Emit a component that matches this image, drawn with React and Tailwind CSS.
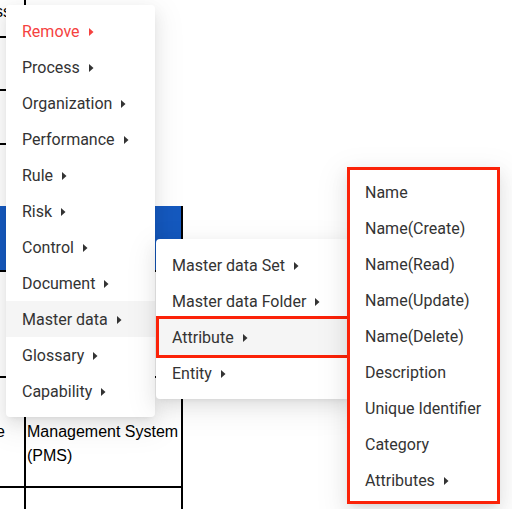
import React from 'react';

const mainItems = [
  { label: 'Remove', danger: true },
  { label: 'Process' },
  { label: 'Organization' },
  { label: 'Performance' },
  { label: 'Rule' },
  { label: 'Risk' },
  { label: 'Control' },
  { label: 'Document' },
  { label: 'Master data', active: true },
  { label: 'Glossary' },
  { label: 'Capability' },
];

const masterDataItems = [
  { label: 'Master data Set' },
  { label: 'Master data Folder' },
  { label: 'Attribute', active: true, marked: true },
  { label: 'Entity' },
];

const attributeItems = [
  { label: 'Name' },
  { label: 'Name(Create)' },
  { label: 'Name(Read)' },
  { label: 'Name(Update)' },
  { label: 'Name(Delete)' },
  { label: 'Description' },
  { label: 'Unique Identifier' },
  { label: 'Category' },
  { label: 'Attributes', sub: true },
];

const Caret = () => (
  <svg width="5" height="8" viewBox="0 0 5 8" className="ml-[9px] shrink-0">
    <path d="M0 0L4.5 4L0 8Z" fill="currentColor" />
  </svg>
);

const menuShadow =
  'shadow-[0_6px_16px_0_rgba(0,0,0,0.08),0_3px_6px_-4px_rgba(0,0,0,0.12),0_9px_28px_8px_rgba(0,0,0,0.05)]';

const MenuItem = ({ item, sub = true }) => (
  <div
    className={`relative flex h-9 items-center px-4 pt-px text-[16px] leading-none ${
      item.danger ? 'text-[#f5423f]' : 'text-[#333333]'
    } ${item.active ? 'bg-[#f5f5f5]' : ''}`}
  >
    <span>{item.label}</span>
    {sub && <Caret />}
    {item.marked && (
      <span className="pointer-events-none absolute -bottom-[3px] -right-[2px] -top-[3px] left-0 border-[3px] border-[#fb2208]" />
    )}
  </div>
);

const App = () => {
  return (
    <div className="relative h-[509px] w-[512px] overflow-hidden bg-white font-['Liberation_Sans',Arial,sans-serif] text-[16px] text-black">
      {/* Background table, mostly hidden by the menus */}
      <div className="w-[152px]">
        <div className="flex h-[38px] border-b-2 border-black">
          <div className="flex w-[26px] shrink-0 justify-end overflow-hidden border-r-2 border-black pr-[13px] pt-[3px] leading-[18px]">
            <span className="whitespace-nowrap">Process</span>
          </div>
          <div className="flex-1" />
        </div>
        <div className="flex h-[53px] border-b-2 border-black">
          <div className="w-[26px] shrink-0 border-r-2 border-black" />
        </div>
        <div className="flex h-[54px] border-b-2 border-black">
          <div className="w-[26px] shrink-0 border-r-2 border-black" />
        </div>
        <div className="flex h-[61px]">
          <div className="w-[26px] shrink-0 border-r-2 border-black" />
        </div>
      </div>
      <div className="w-[183px] border-r-2 border-black">
        <div className="h-[66px] border-b-2 border-black bg-[#1559bf]" />
        <div className="flex h-[106px] border-b-2 border-black">
          <div className="w-[26px] shrink-0 border-r-2 border-black" />
        </div>
        <div className="flex h-[110px] border-b-2 border-black">
          <div className="flex w-[26px] shrink-0 items-center justify-end overflow-hidden border-r-2 border-black pr-[19px]">
            <span className="whitespace-nowrap">Performance</span>
          </div>
          <div className="flex flex-1 items-center pl-[1px] leading-[24px]">
            <div>
              Performance
              <br />
              Management System
              <br />
              (PMS)
            </div>
          </div>
        </div>
        <div className="flex h-[40px]">
          <div className="w-[26px] shrink-0 border-r-2 border-black" />
        </div>
      </div>

      {/* Context menu */}
      <div
        className={`absolute left-[6px] top-[5px] w-[149px] rounded-[4px] bg-white py-2 font-['Roboto',sans-serif] ${menuShadow}`}
      >
        {mainItems.map((item) => (
          <MenuItem key={item.label} item={item} />
        ))}
      </div>

      {/* Master data submenu */}
      <div
        className={`absolute left-[156px] top-[239px] w-[195px] rounded-[4px] bg-white py-2 font-['Roboto',sans-serif] ${menuShadow}`}
      >
        {masterDataItems.map((item) => (
          <MenuItem key={item.label} item={item} />
        ))}
      </div>

      {/* Attribute submenu */}
      <div
        className={`absolute left-[347px] top-[167px] w-[153px] border-[3px] border-[#fb2208] bg-white pb-[3px] pt-[4px] font-['Roboto',sans-serif] ${menuShadow}`}
      >
        {attributeItems.map((item) => (
          <div
            key={item.label}
            className="flex h-9 items-center px-[15px] pt-px text-[16px] leading-none text-[#333333]"
          >
            <span>{item.label}</span>
            {item.sub && <Caret />}
          </div>
        ))}
      </div>
    </div>
  );
};

export default App;
